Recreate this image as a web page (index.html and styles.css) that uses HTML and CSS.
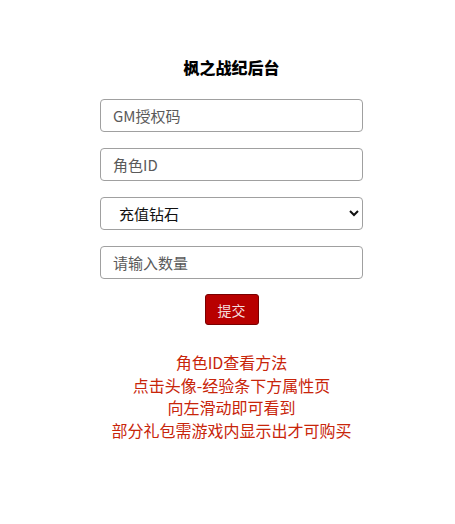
FILE: index.html
```html
<!DOCTYPE html>
<html lang="zh">
<head>
<meta charset="utf-8">
<title>枫之战纪后台</title>
<link rel="stylesheet" href="styles.css">
</head>
<body>
<main class="page">
  <h1 class="title">枫之战纪后台</h1>
  <form class="form">
    <input class="field" type="text" placeholder="GM授权码">
    <input class="field" type="text" placeholder="角色ID">
    <select class="field select">
      <option>充值钻石</option>
    </select>
    <input class="field" type="text" placeholder="请输入数量">
    <button class="submit" type="button">提交</button>
  </form>
  <div class="notes">
    <p>角色ID查看方法</p>
    <p>点击头像-经验条下方属性页</p>
    <p>向左滑动即可看到</p>
    <p>部分礼包需游戏内显示出才可购买</p>
  </div>
</main>
</body>
</html>
```

FILE: styles.css
```css
html, body {
  margin: 0;
  padding: 0;
  background: #ffffff;
}
body {
  font-family: "Noto Sans CJK SC", "Noto Sans", sans-serif;
  color: #000;
}
.page {
  display: flex;
  flex-direction: column;
  align-items: center;
  padding-top: 55px;
  padding-left: 8px;
}
.title {
  margin: 0;
  font-size: 16px;
  line-height: 24px;
  font-weight: 900;
}
.form {
  margin-top: 20px;
  width: 263px;
  display: flex;
  flex-direction: column;
  align-items: center;
  gap: 16px;
}
.field {
  box-sizing: border-box;
  width: 100%;
  height: 33px;
  border: 1.5px solid #a0a0a0;
  border-radius: 4px;
  padding: 0 12px;
  font-family: "Noto Sans CJK SC", "Noto Sans", sans-serif;
  font-size: 15px;
  color: #222;
  background: #fff;
  outline: none;
}
.field::placeholder {
  color: #5a5a5a;
}
.select {
  padding-left: 14px;
  color: #111;
}
.submit {
  margin-top: -1px;
  width: 54px;
  height: 31px;
  border: 1px solid #7a0000;
  border-radius: 3px;
  background: #b80000;
  color: #f4dede;
  font-family: "Noto Sans CJK SC", "Noto Sans", sans-serif;
  font-size: 14px;
  padding: 0;
}
.notes {
  margin-top: 26px;
  text-align: center;
  color: #c8250a;
  font-size: 16px;
  line-height: 22.6px;
}
.notes p {
  margin: 0;
}
```
